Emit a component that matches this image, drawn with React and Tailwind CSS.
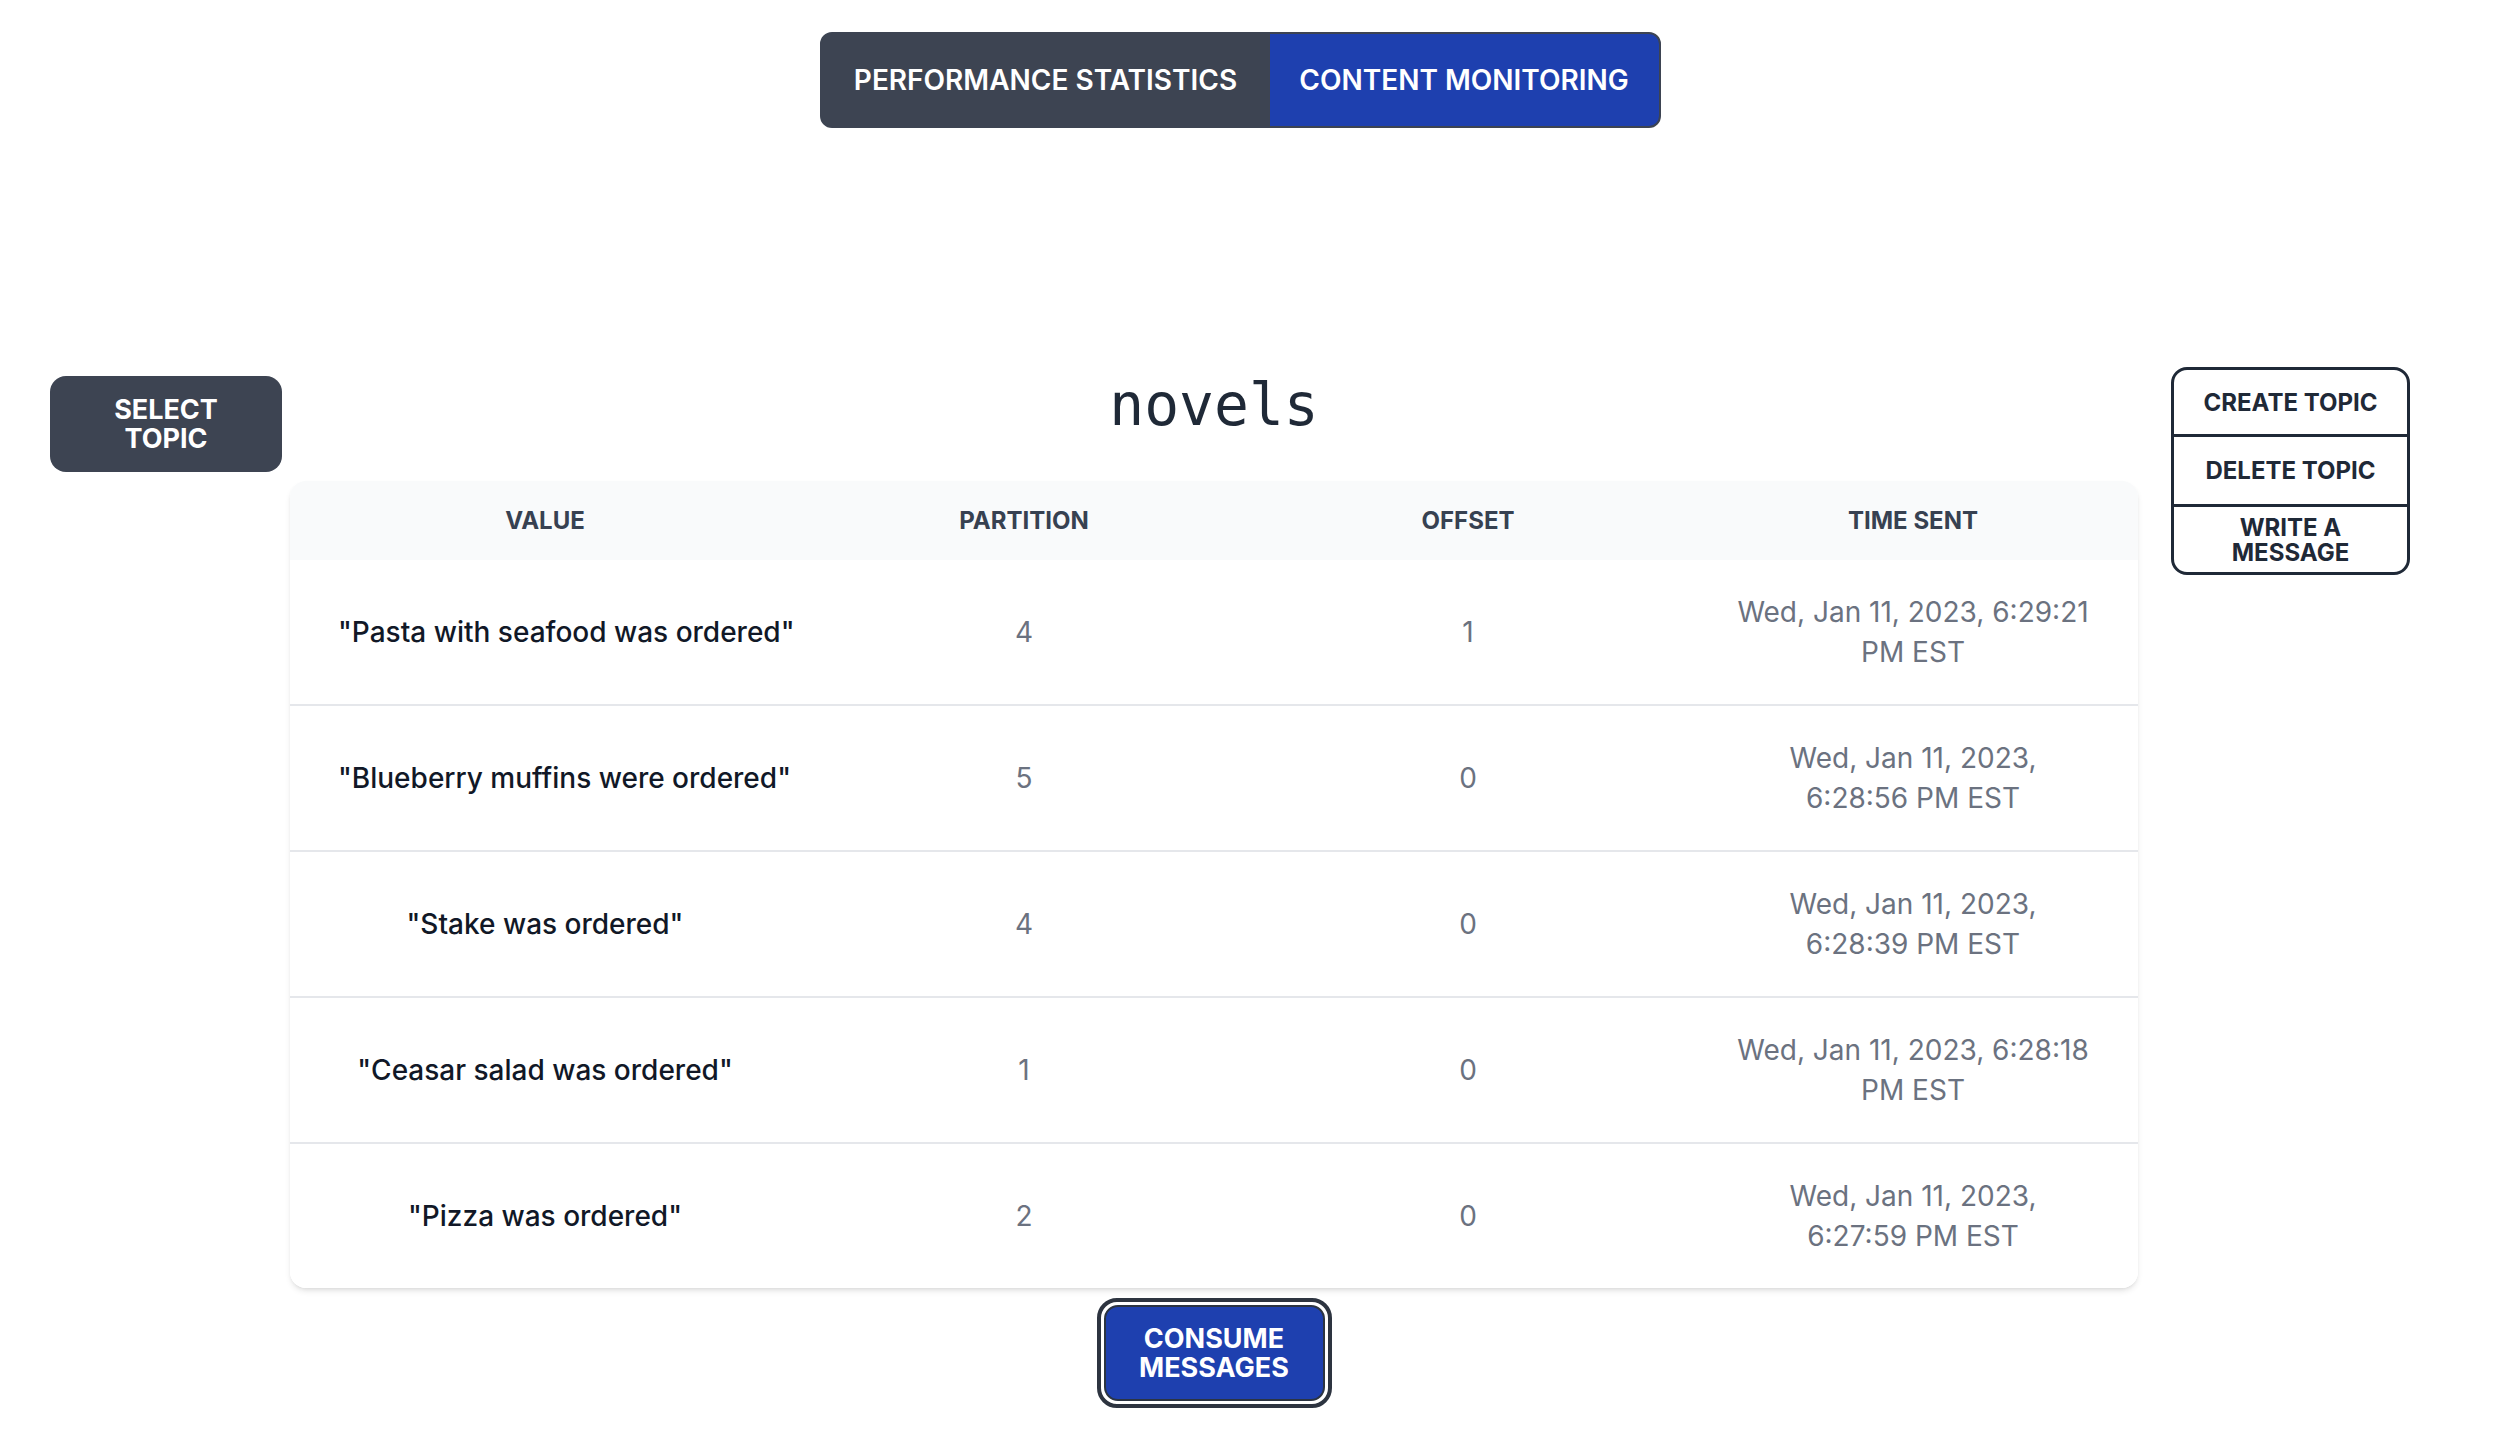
import React from "react";

const rows = [
  { value: '"Pasta with seafood was ordered"', partition: 4, offset: 1, time: ["Wed, Jan 11, 2023, 6:29:21", "PM EST"] },
  { value: '"Blueberry muffins were ordered"', partition: 5, offset: 0, time: ["Wed, Jan 11, 2023,", "6:28:56 PM EST"] },
  { value: '"Stake was ordered"', partition: 4, offset: 0, time: ["Wed, Jan 11, 2023,", "6:28:39 PM EST"] },
  { value: '"Ceasar salad was ordered"', partition: 1, offset: 0, time: ["Wed, Jan 11, 2023, 6:28:18", "PM EST"] },
  { value: '"Pizza was ordered"', partition: 2, offset: 0, time: ["Wed, Jan 11, 2023,", "6:27:59 PM EST"] },
];

const actionBtn =
  "flex items-center justify-center text-center text-[#1f2937] text-[24px] font-bold uppercase leading-[25px]";

export default function App() {
  return (
    <div className="min-h-screen bg-white font-['Inter','Noto_Sans',sans-serif]">
      {/* Tabs */}
      <div className="flex justify-center pt-8 pr-5">
        <div className="flex border-2 border-[#3d4452] bg-[#3d4452] rounded-[12px] overflow-hidden">
          <button className="w-[448px] h-[92px] flex items-center justify-center text-white text-[28px] font-semibold uppercase">
            Performance Statistics
          </button>
          <button className="w-[389px] h-[92px] flex items-center justify-center bg-[#1e40af] text-white text-[28px] font-semibold uppercase">
            Content Monitoring
          </button>
        </div>
      </div>

      <div className="flex items-start mt-[239px] pl-[50px]">
        {/* Select topic */}
        <button className="mt-[9px] w-[232px] h-[96px] rounded-2xl bg-[#3d4452] text-white text-[27px] font-bold leading-[29px] uppercase">
          Select
          <br />
          Topic
        </button>

        {/* Center column */}
        <div className="ml-[8px] w-[1848px] flex flex-col items-center">
          <h1 className="mt-[9px] text-[58px] leading-none text-[#1f2937] font-['DejaVu_Sans_Mono',monospace]">
            novels
          </h1>

          <div className="mt-[47px] w-full rounded-2xl overflow-hidden shadow-md">
            <table className="w-full table-fixed border-collapse text-center">
              <colgroup>
                <col className="w-[510px]" />
                <col className="w-[448px]" />
                <col className="w-[440px]" />
                <col className="w-[450px]" />
              </colgroup>
              <thead className="bg-[#f9fafb] text-[#374151] text-[24px] uppercase">
                <tr className="h-[79px]">
                  <th className="px-12 font-bold">Value</th>
                  <th className="px-12 font-bold">Partition</th>
                  <th className="px-12 font-bold">Offset</th>
                  <th className="px-12 font-bold">Time Sent</th>
                </tr>
              </thead>
              <tbody className="text-[28px] leading-[40px]">
                {rows.map((r, i) => (
                  <tr key={i} className={i < rows.length - 1 ? "border-b-2 border-[#e5e7eb] bg-white" : "bg-white"}>
                    <td className="px-12 py-8 h-[144px] font-medium text-[#111827] whitespace-nowrap">{r.value}</td>
                    <td className="px-12 py-8 text-[#6b7280]">{r.partition}</td>
                    <td className="px-12 py-8 text-[#6b7280]">{r.offset}</td>
                    <td className="px-12 py-8 text-[#6b7280] whitespace-nowrap">
                      {r.time[0]}
                      <br />
                      {r.time[1]}
                    </td>
                  </tr>
                ))}
              </tbody>
            </table>
          </div>

          {/* Consume */}
          <div className="mt-[10px] w-[235px] h-[110px] border-4 border-[#2d3440] rounded-[20px] p-[3px]">
            <button className="w-full h-full rounded-[14px] border-2 border-[#2b3442] bg-[#1e40af] text-white text-[27px] font-bold leading-[29px] uppercase">
              Consume
              <br />
              Messages
            </button>
          </div>
        </div>

        {/* Right actions */}
        <div className="ml-[33px] w-[239px] flex flex-col border-[3px] border-[#1f2937] rounded-2xl overflow-hidden">
          <button className={`h-[67px] border-b-[3px] border-[#1f2937] ${actionBtn}`}>
            Create Topic
          </button>
          <button className={`h-[70px] border-b-[3px] border-[#1f2937] ${actionBtn}`}>
            Delete Topic
          </button>
          <button className={`h-[65px] ${actionBtn}`}>
            Write a
            <br />
            Message
          </button>
        </div>
      </div>
    </div>
  );
}
